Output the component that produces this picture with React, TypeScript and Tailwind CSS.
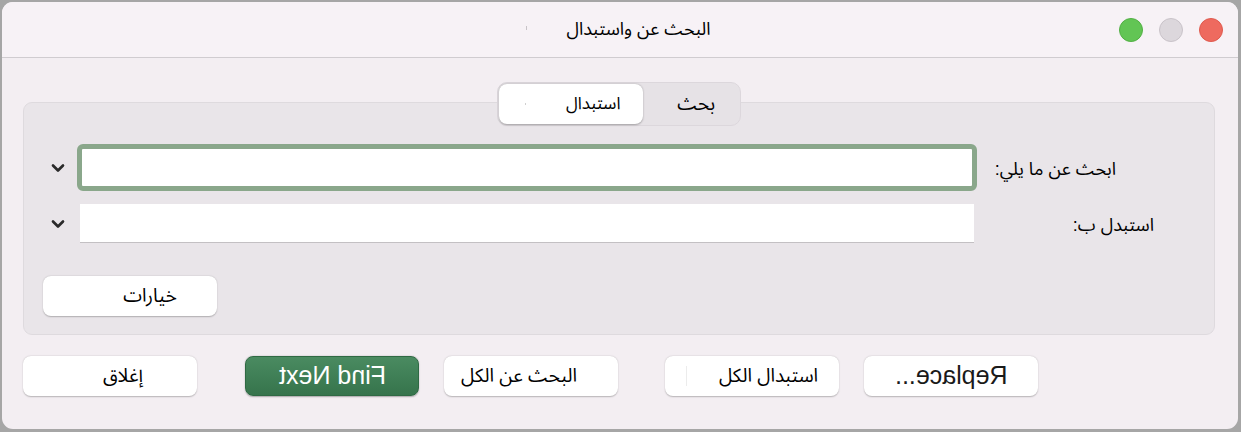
import { ChevronDown } from "lucide-react"

const font = { fontFamily: '"Liberation Sans", "Noto Sans Arabic", "DejaVu Sans", sans-serif' }

function TrafficLights() {
  return (
    <div className="flex items-center gap-[16px] pr-[15px]">
      <span className="size-[24px] rounded-full border border-[#e05a4e] bg-[#ee6a5f]" />
      <span className="size-[24px] rounded-full border border-[#c9c3c9] bg-[#dcd7dc]" />
      <span className="size-[24px] rounded-full border border-[#52b044] bg-[#62c554]" />
    </div>
  )
}

function Btn({ children, className = "" }: { children: React.ReactNode; className?: string }) {
  return (
    <button
      className={`relative flex h-[40px] w-[174px] shrink-0 items-center justify-center rounded-[8px] bg-white text-[19px] text-black shadow-[0_0.5px_1.5px_rgba(0,0,0,0.25)] ${className}`}
    >
      {children}
    </button>
  )
}

export default function App() {
  return (
    <div className="h-[432px] w-[1241px] bg-[#a6a6a6] pb-[3px] pl-[2px] pr-[3px] pt-[2px]" style={font}>
      <div dir="rtl" className="flex h-full flex-col overflow-hidden rounded-[11px] bg-[#f3eef2]">
        {/* title bar */}
        <div className="flex h-[56px] shrink-0 items-center border-b border-[#d0ccd0] bg-[#f7f2f6]">
          <TrafficLights />
          <div className="flex flex-1 items-center justify-center text-[18px] text-black">
            <span className="relative">
              البحث عن واستبدال
              <span className="absolute -left-[40px] top-[10px] h-[4px] w-px bg-[#c8c4c8]" />
            </span>
          </div>
          <div className="w-[156px]" />
        </div>

        <div className="flex flex-col pl-[21px] pr-[23px] pt-[24px]">
          {/* segmented control */}
          <div className="relative z-10 -mb-[24px] flex justify-center">
            <div className="flex h-[44px] w-[244px] rounded-[10px] border border-[#dcd7dc] bg-[#e6e2e6] p-[1px] text-[17px]">
              <div className="flex w-[96px] items-center justify-center pl-[10px] text-[19px]">بحث</div>
              <div className="relative flex w-[145px] items-center justify-center rounded-[8px] bg-white pl-[44px] shadow-[0_0.5px_2px_rgba(0,0,0,0.3)]">
                استبدال
                <span className="absolute left-[26px] top-[19px] h-[2px] w-px bg-[#d0d0d0]" />
              </div>
            </div>
          </div>

          {/* panel */}
          <div className="flex h-[233px] flex-col rounded-[9px] border border-[#dedade] bg-[#e9e5e9] pb-[18px] pt-[41px] text-[18px]">
            <div className="flex h-[47px] items-center">
              <div className="w-[237px] pr-[98px] pt-[3px]">ابحث عن ما يلي:</div>
              <div className="h-[47px] w-[900px] rounded-[6px] border-[5px] border-[#8aa78b] bg-white" />
              <ChevronDown className="mr-[9px] size-[20px] text-[#2a2a2a]" strokeWidth={3.2} />
            </div>
            <div className="mt-[13px] flex h-[39px] items-center">
              <div className="w-[240px] pr-[60px] pt-[3px]">استبدل ب:</div>
              <div className="h-[39px] w-[894px] border-b border-[#c3c0c3] bg-white" />
              <ChevronDown className="mr-[12px] size-[20px] text-[#2a2a2a]" strokeWidth={3.2} />
            </div>
            <div className="mt-auto flex justify-end pl-[19px]">
              <Btn className="pl-[40px]">خيارات</Btn>
            </div>
          </div>

          {/* bottom buttons */}
          <div className="mt-[21px] flex pr-[177px]">
            <Btn>
              <span dir="ltr" className="-scale-x-100 text-[25px] text-[#1a1a1a]">Replace...</span>
            </Btn>
            <Btn className="mr-[25px] pl-[33px]">
              استبدال الكل
              <span className="absolute left-[21px] top-[10px] h-[20px] w-px bg-[#ececec]" />
            </Btn>
            <Btn className="mr-[47px] pr-[24px]">البحث عن الكل</Btn>
            <button className="mr-[25px] flex h-[40px] w-[174px] shrink-0 items-center justify-center rounded-[8px] border border-[#2f6a44] bg-gradient-to-b from-[#4a8b61] to-[#36744c] text-white shadow-[0_0.5px_1.5px_rgba(0,0,0,0.3)]">
              <span dir="ltr" className="-scale-x-100 text-[25px]">Find Next</span>
            </button>
            <Btn className="mr-[48px] pl-[26px]">إغلاق</Btn>
          </div>
        </div>
      </div>
    </div>
  )
}
